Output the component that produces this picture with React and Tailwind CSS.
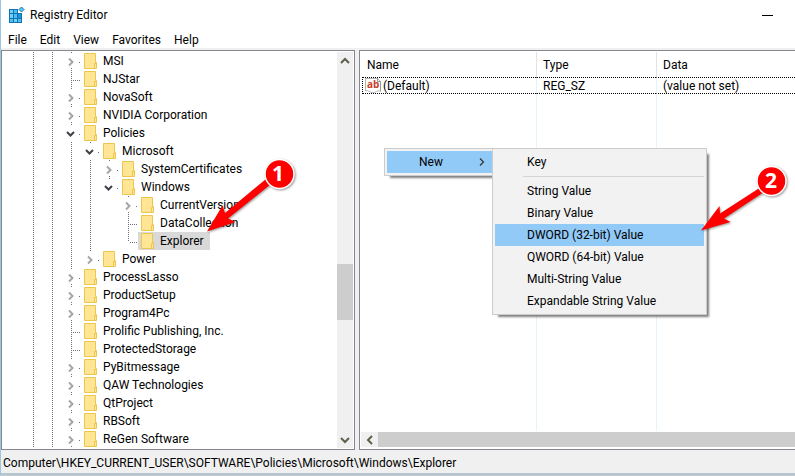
import React from 'react'

const TREE = [
  { name: 'MSI', level: 0, state: 'closed' },
  { name: 'NJStar', level: 0 },
  { name: 'NovaSoft', level: 0, state: 'closed' },
  { name: 'NVIDIA Corporation', level: 0, state: 'closed' },
  { name: 'Policies', level: 0, state: 'open' },
  { name: 'Microsoft', level: 1, state: 'open' },
  { name: 'SystemCertificates', level: 2, state: 'closed' },
  { name: 'Windows', level: 2, state: 'open', last: true },
  { name: 'CurrentVersion', level: 3, state: 'closed' },
  { name: 'DataCollection', level: 3 },
  { name: 'Explorer', level: 3, last: true, selected: true },
  { name: 'Power', level: 1, state: 'closed', last: true },
  { name: 'ProcessLasso', level: 0, state: 'closed' },
  { name: 'ProductSetup', level: 0, state: 'closed' },
  { name: 'Program4Pc', level: 0, state: 'closed' },
  { name: 'Prolific Publishing, Inc.', level: 0 },
  { name: 'ProtectedStorage', level: 0 },
  { name: 'PyBitmessage', level: 0, state: 'closed' },
  { name: 'QAW Technologies', level: 0, state: 'closed' },
  { name: 'QtProject', level: 0, state: 'closed' },
  { name: 'RBSoft', level: 0, state: 'closed' },
  { name: 'ReGen Software', level: 0, state: 'closed' },
]

const MENUS = ['File', 'Edit', 'View', 'Favorites', 'Help']

const NEW_ITEMS = [
  'String Value',
  'Binary Value',
  'DWORD (32-bit) Value',
  'QWORD (64-bit) Value',
  'Multi-String Value',
  'Expandable String Value',
]

function RegistryIcon() {
  return (
    <svg className="h-4 w-4" viewBox="0 0 16 16" aria-hidden="true">
      <path d="M0 2h9v4h4v10H0z" fill="#1173b0" />
      <path d="M1 3h3v3H1zM1 7h3v4H1zM5 12h3v3H5z" fill="#6fd0fb" />
      <path d="M5 3h3v3H5zM5 7h3v4H5zM1 12h3v3H1zM9 12h3v3H9z" fill="#4fc0f4" />
      <path d="M9 7h3v4H9z" fill="#1d93d8" />
      <path d="M12.500 0l2.500 2.500-2.500 2.500-2.500-2.500z" fill="#5cc4f2" stroke="#1276b4" />
    </svg>
  )
}

function FolderIcon() {
  return (
    <svg className="h-4 w-[13px]" viewBox="0 0 13 16" aria-hidden="true">
      <path d="M.5.5h11v9h1v6H.5z" fill="#ffe594" stroke="#edc64c" />
      <path d="M10.500 15v-4.500h2" fill="none" stroke="#edc64c" />
    </svg>
  )
}

function StringIcon() {
  return (
    <svg className="h-[15px] w-4 overflow-visible" viewBox="0 0 16 15" aria-hidden="true">
      <path d="M.5.5h12l3 3v10l-2-1-2 1-2 1h-3l-2-1-2-1-2 .5z" fill="#fff" stroke="#b4b4b4" />
      <path d="M12.500.5v3h3v9" fill="none" stroke="#8f9a94" />
      <text x="2" y="10" fontSize="10" fontWeight="bold" fill="#c8402c" fontFamily="Open Sans, sans-serif">ab</text>
    </svg>
  )
}

function Arrow({ dir }) {
  const paths = { up: 'M1 7l4-4 4 4', down: 'M1 3l4 4 4-4', left: 'M7 1L3 5l4 4' }
  return (
    <svg className="h-[10px] w-[10px]" viewBox="0 0 10 10" aria-hidden="true">
      <path d={paths[dir]} fill="none" stroke="#5f5f4a" strokeWidth="2" />
    </svg>
  )
}

function Guide() {
  return (
    <svg className="h-[18px] w-[19px] shrink-0" viewBox="0 0 19 18" shapeRendering="crispEdges" aria-hidden="true">
      <path d="M9.500 0v18" stroke="#707070" strokeDasharray="1 1" />
    </svg>
  )
}

function Branch({ item }) {
  if (!item.state) {
    return (
      <svg className="h-[18px] w-[19px] shrink-0" viewBox="0 0 19 18" shapeRendering="crispEdges" aria-hidden="true">
        <path d={item.last ? 'M9.500 0v10' : 'M9.500 0v18'} stroke="#707070" strokeDasharray="1 1" />
        <path d="M11 10.500h8" stroke="#707070" strokeDasharray="1 1" />
      </svg>
    )
  }
  const open = item.state === 'open'
  return (
    <button className="h-[18px] w-[19px] shrink-0" aria-label={open ? 'Collapse ' + item.name : 'Expand ' + item.name}>
      <svg className="h-[18px] w-[19px]" viewBox="0 0 19 18" aria-hidden="true">
        <path d={item.last || open ? 'M9.500 0v1' : 'M9.500 0v1M9.500 16v1'} stroke="#707070" shapeRendering="crispEdges" />
        <path d="M17 10.500h2" stroke="#707070" strokeDasharray="1 1" shapeRendering="crispEdges" />
        {open ? (
          <path d="M5 8l3.500 3.500L12 8" fill="none" stroke="#404048" strokeWidth="2" />
        ) : (
          <path d="M7 6.500l3.500 3.500L7 13.500" fill="none" stroke="#a6a6a6" strokeWidth="2" />
        )}
      </svg>
    </button>
  )
}

function TreeRow({ item }) {
  // the deepest open branch is the last child, so it leaves a blank column
  const columns = [0, 1]
  for (let i = 0; i < item.level; i++) columns.push(i + 2)

  return (
    <li className="flex h-[18px] items-center">
      {columns.map(c => (c === 4 ? <span key={c} className="w-[19px] shrink-0" /> : <Guide key={c} />))}
      <Branch item={item} />
      <span className={item.selected ? 'flex h-[18px] items-center gap-1.5 bg-[#d9d9d9] pl-[3px] pr-1.5' : 'flex h-[18px] items-center gap-1.5 pl-[3px]'}>
        <FolderIcon />
        <span className="whitespace-nowrap">{item.name}</span>
      </span>
    </li>
  )
}

function KeyTree() {
  return (
    <nav className="flex w-[354px] shrink-0 border border-[#828790] bg-white py-px" aria-label="Registry keys">
      <ul className="min-w-0 flex-1 overflow-hidden pl-[22px]">
        {TREE.map(item => <TreeRow key={item.name} item={item} />)}
      </ul>
      <div className="mr-px flex w-4 flex-col bg-[#f0f0f0]">
        <button className="flex h-[17px] items-center justify-center" aria-label="Scroll up"><Arrow dir="up" /></button>
        <div className="flex flex-1 flex-col">
          <div className="grow-[195]" />
          <div className="grow-[56] bg-[#cdcdcd]" />
          <div className="grow-[111]" />
        </div>
        <button className="flex h-[17px] items-center justify-center" aria-label="Scroll down"><Arrow dir="down" /></button>
      </div>
    </nav>
  )
}

function ValueList() {
  return (
    <main className="flex min-w-0 flex-1 flex-col border-y border-l border-[#828790] bg-white pt-px">
      <div className="min-h-0 flex-1 pl-0.5">
        <table className="h-full w-full table-fixed border-separate border-spacing-0 text-left">
          <thead>
            <tr className="h-[25px]">
              <th className="w-[174px] pl-[5px] font-normal">Name</th>
              <th className="w-[120px] border-l border-[#e2e2e2] pl-1.5 font-normal">Type</th>
              <th className="border-l border-[#e2e2e2] pl-1.5 font-normal">Data</th>
            </tr>
          </thead>
          <tbody>
            <tr className="h-[17px] leading-[14px]">
              <td className="border-y border-l border-dotted border-black p-0">
                <span className="flex h-[15px] items-center gap-0.5 pl-0.5">
                  <StringIcon />
                  <span className="pt-px">(Default)</span>
                </span>
              </td>
              <td className="border-y border-l border-y-black border-l-[#e5f3fb] pb-0 pl-1.5 pt-px [border-block-style:dotted]">REG_SZ</td>
              <td className="border-y border-l border-y-black border-l-[#e5f3fb] pb-0 pl-1.5 pt-px [border-block-style:dotted]">(value not set)</td>
            </tr>
            <tr>
              <td />
              <td className="border-l border-[#e5f3fb]" />
              <td className="border-l border-[#e5f3fb]" />
            </tr>
          </tbody>
        </table>
      </div>
      <div className="mb-0.5 ml-px mt-px flex h-[15px] bg-[#cdcdcd]">
        <button className="flex w-[17px] items-center justify-center bg-[#f0f0f0]" aria-label="Scroll left"><Arrow dir="left" /></button>
      </div>
    </main>
  )
}

function ContextMenu() {
  return (
    <>
      <div role="menu" className="absolute left-[383px] top-[148px] w-[111px] border border-[#ccc] bg-[#f2f2f2] p-0.5 shadow-[4px_4px_2px_-2px_rgba(0,0,0,0.5)]">
        <button role="menuitem" aria-haspopup="menu" className="flex h-[22px] w-full items-center justify-between bg-[#91c9f7] pl-8 pr-1">
          New
          <svg className="h-[10px] w-[10px]" viewBox="0 0 10 10" aria-hidden="true">
            <path d="M2 1.500L5.500 5 2 8.500" fill="none" stroke="#333" strokeWidth="1.200" />
          </svg>
        </button>
      </div>
      <div role="menu" className="absolute left-[491px] top-[148px] w-[215px] border border-[#ccc] bg-[#f2f2f2] p-0.5 shadow-[4px_4px_2px_-2px_rgba(0,0,0,0.5)]">
        <button role="menuitem" className="block h-[22px] w-full pl-8 text-left">Key</button>
        <hr className="my-[3px] ml-7 border-[#d4d4d4]" />
        {NEW_ITEMS.map(label => (
          <button
            key={label}
            role="menuitem"
            className={label.startsWith('DWORD') ? 'block h-[22px] w-full bg-[#91c9f7] pl-8 text-left' : 'block h-[22px] w-full pl-8 text-left'}
          >
            {label}
          </button>
        ))}
      </div>
    </>
  )
}

function Callouts() {
  return (
    <svg className="pointer-events-none absolute left-0 top-0 h-[476px] w-[794px]" viewBox="1 0 794 476" aria-hidden="true">
      <g style={{ filter: 'drop-shadow(1px 1px 1px rgba(0,0,0,0.4))' }}>
        <path d="M207 231.500L222.500 205.500 225 213 266 179 271 184 228 218.500 235.500 222z" fill="#f00" />
        <path d="M701 230.500L719.500 206 720 213.500 761 187 764 192 724 218.500 730.500 222z" fill="#f00" />
        <circle cx="279.500" cy="174" r="14.500" fill="#f00" stroke="#fff" strokeWidth="1.500" />
        <circle cx="771.500" cy="181" r="14.500" fill="#f00" stroke="#fff" strokeWidth="1.500" />
      </g>
      <g fill="#fff" fontFamily="Open Sans, sans-serif" fontWeight="bold" fontSize="21" textAnchor="middle">
        <text x="278" y="181">1</text>
        <text x="771" y="188">2</text>
      </g>
    </svg>
  )
}

export default function App() {
  return (
    <div className="relative overflow-hidden border-b border-l border-b-[#c8c8c8] border-l-[#9cc7e0] bg-[#f0f0f0] font-[Roboto,'Open_Sans',sans-serif] text-[12px] leading-[18px] text-black">
      <header className="bg-white">
        <div className="flex h-[30px] items-center justify-between pl-2 pr-[22px]">
          <h1 className="flex items-center gap-[5px]">
            <RegistryIcon />
            Registry Editor
          </h1>
          <button className="flex h-5 w-[11px] items-center" aria-label="Minimize">
            <span className="h-px w-full bg-black" />
          </button>
        </div>
        <div role="menubar" className="flex h-[18px] items-center gap-[13px] pl-[7px] pt-0.5">
          {MENUS.map(m => <button key={m} role="menuitem">{m}</button>)}
        </div>
      </header>
      <div className="flex gap-1 pt-0.5">
        <KeyTree />
        <ValueList />
      </div>
      <footer className="h-[25px] border-b-2 border-[#b4c6d2] pl-0.5 pt-1">
        Computer\HKEY_CURRENT_USER\SOFTWARE\Policies\Microsoft\Windows\Explorer
      </footer>
      <ContextMenu />
      <Callouts />
    </div>
  )
}
